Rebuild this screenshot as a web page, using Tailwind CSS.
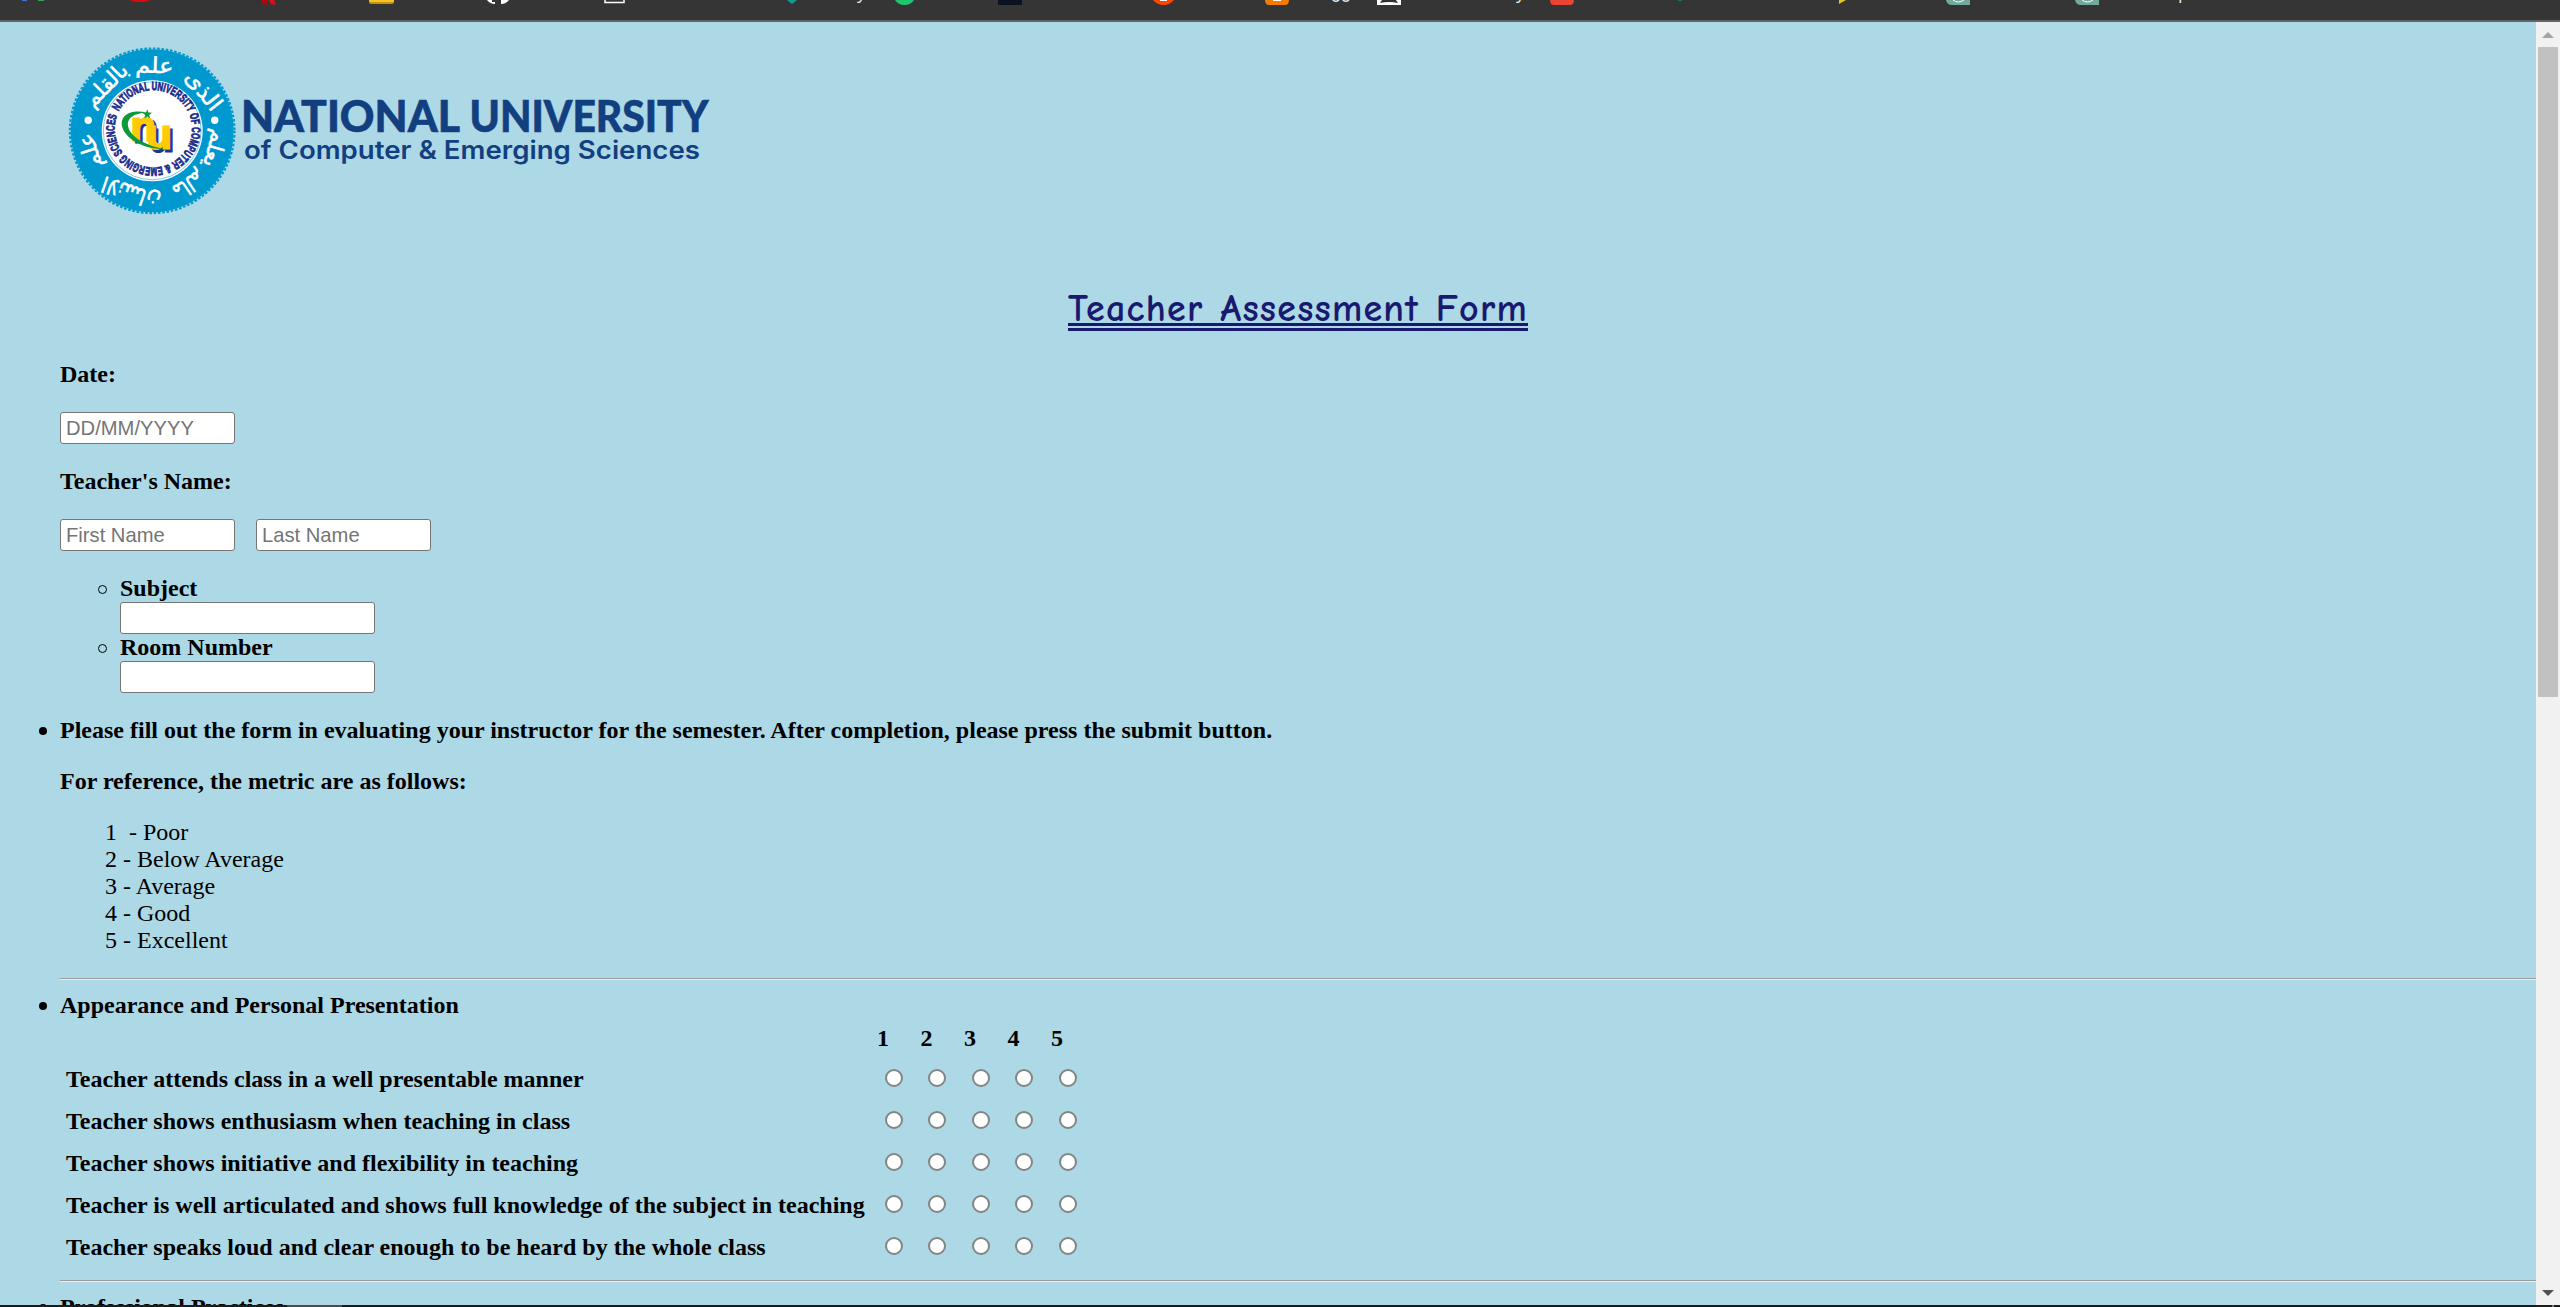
<!DOCTYPE html>
<html lang="en">
<head>
<meta charset="utf-8">
<title>Teacher Assessment Form</title>
<script src="https://cdn.jsdelivr.net/npm/@tailwindcss/browser@4"></script>
</head>
<body class="w-[2560px] h-[1307px] overflow-hidden bg-[#add8e6] flex flex-col text-black">

<!-- Browser bookmarks bar -->
<header class="h-[22px] shrink-0 bg-[#353535] border-b-2 border-[#646464]">
  <svg width="2560" height="20" viewBox="0 0 2560 20" class="block overflow-hidden" font-family="'Open Sans', sans-serif" font-size="18" fill="#e8e8e8">
    <rect x="22" y="0" width="5" height="1" fill="#3f74d8"/><rect x="38" y="0" width="6" height="1" fill="#34a853"/>
    <path d="M130 0h20q-3 2-10 2t-10-2z" fill="#d60d0d"/>
    <path d="M262 0h6v5l-6-1z" fill="#a80710"/><path d="M269 0h5l2 5-5-1z" fill="#e50914"/>
    <path d="M369 0h25v2q0 2-2 2h-21q-2 0-2-2z" fill="#c8910a"/><path d="M369 0h25v1q0 1-2 1h-21q-2 0-2-1z" fill="#f5c427"/>
    <path d="M487 0q3 4 8 4V0zM501 0v4q5 0 8-4z" fill="#fff"/><rect x="492" y="0" width="3" height="2" fill="#353535"/>
    <path d="M605 0v2.500h19V0" fill="none" stroke="#fff" stroke-width="1.500"/>
    <path d="M787 0h10l-5 4z" fill="#0e9f94"/>
    <text x="857" y="-1">y</text>
    <path d="M895 0h19q-3 5-9.500 5T895 0z" fill="#1fc46f"/>
    <rect x="998" width="24" height="5" fill="#0b1220"/>
    <path d="M1153 0h21q-4 5-10.500 5T1153 0z" fill="#ff4500"/><rect x="1160" width="7" height="1" fill="#fff"/>
    <path d="M1265 0h24q0 5-4 5h-16q-4 0-4-5z" fill="#f57c00"/><rect x="1273" width="8" height="1" fill="#fff"/>
    <text x="1331" y="-2" font-family="Roboto, sans-serif">gg</text>
    <rect x="1377" width="24" height="5" fill="#fff"/><path d="M1382 0h14l2 3q-9-2-18 0z" fill="#333"/>
    <text x="1516" y="-1">y</text>
    <path d="M1550 0h24q0 5-4 5h-16q-4 0-4-5z" fill="#e94435"/>
    <rect x="1678" width="4" height="1" fill="#1d6f7c"/>
    <path d="M1839 0h7l-7 4z" fill="#e8c51c"/>
    <path d="M1946 0h24v5h-18q-5 0-6-5z" fill="#74aa9c"/><path d="M1953 0q5 4 11 0" stroke="#fff" fill="none"/>
    <path d="M2075 0h24v5h-18q-5 0-6-5z" fill="#74aa9c"/><path d="M2082 0q5 4 11 0" stroke="#fff" fill="none"/>
    <text x="2178" y="-1">p</text>
  </svg>
</header>

<div class="flex h-[1283px] shrink-0">
  <main class="w-[2536px] h-[1283px] overflow-hidden pl-[60px] font-['Liberation_Serif',serif] text-[24px] leading-[27px]">

    <!-- University logo -->
    <svg width="680" height="208" viewBox="60 22 680 208" class="block">
      <g transform="translate(152.200 130.800)">
        <circle r="81.500" fill="#0099cf"/>
        <circle r="82.300" fill="none" stroke="#0099cf" stroke-width="2.200" stroke-dasharray="2.600 1.710"/>
        <circle r="50.500" fill="#fff"/>
        <circle r="48.900" fill="none" stroke="#5bbcdf" stroke-width=".8"/>
        <circle cx="-64" cy="-10.500" r="3.700" fill="#fff"/><circle cx="62.500" cy="-10.500" r="3.700" fill="#fff"/>
        <g fill="#fff" stroke="#fff" stroke-width=".5" font-family="'DejaVu Sans', sans-serif" font-size="22" text-anchor="middle">
          <text transform="rotate(52) translate(0 -58)" textLength="45" lengthAdjust="spacingAndGlyphs">الذى</text>
          <text transform="rotate(2) translate(0 -58)" textLength="38" lengthAdjust="spacingAndGlyphs">علم</text>
          <text transform="rotate(-45) translate(0 -58)" textLength="52" lengthAdjust="spacingAndGlyphs">بالقلم</text>
          <text transform="rotate(-108) translate(0 -58)" textLength="36" lengthAdjust="spacingAndGlyphs">علم</text>
          <text transform="rotate(-161) translate(0 -58)" textLength="60" lengthAdjust="spacingAndGlyphs">الانسان</text>
          <text transform="rotate(146) translate(0 -58)" textLength="34" lengthAdjust="spacingAndGlyphs">مالم</text>
          <text transform="rotate(106) translate(0 -58)" textLength="38" lengthAdjust="spacingAndGlyphs">يعلم</text>
        </g>
        <path id="ring" d="M-33.500 -19.400A38.700 38.700 0 1 1 -33.550 -19.300" fill="none"/>
        <text font-family="'Liberation Sans Narrow','Liberation Sans',sans-serif" font-weight="700" font-size="12" fill="#1b2a8c" stroke="#1b2a8c" stroke-width=".8"><textPath href="#ring" textLength="238" lengthAdjust="spacingAndGlyphs">NATIONAL UNIVERSITY OF COMPUTER &amp; EMERGING SCIENCES</textPath></text>
        <g font-family="'DejaVu Sans',sans-serif" font-weight="700" font-size="42">
          <g fill="#1f3390" stroke="#1f3390"><text x="-20" y="12.500" textLength="27" lengthAdjust="spacingAndGlyphs">n</text><text x="-4" y="21" textLength="27" lengthAdjust="spacingAndGlyphs">u</text></g>
          <g fill="#ffcb05" stroke="#ffcb05"><text x="-22.500" y="10.500" textLength="27" lengthAdjust="spacingAndGlyphs">n</text><text x="-6.500" y="18.500" textLength="27" lengthAdjust="spacingAndGlyphs">u</text></g>
        </g>
        <path d="M-5 -18C-20 -22 -33 -16 -30 -4C-27 8 -8 19 11 18C-6 15 -22 6 -24 -4C-26 -13 -17 -18 -5 -18Z" fill="#0a9a3c"/>
        <path d="M-5 -21.500l1.200 3.200 3.600.2-2.800 2.200 1 3.500-3-1.900-3 1.900 1-3.500-2.800-2.200 3.600-.2z" fill="#0a9a3c"/>
      </g>
      <g fill="#123f80">
        <g font-family="Lato, sans-serif" font-weight="900" font-size="43.500" stroke="#123f80" stroke-width=".6">
          <text x="241" y="132" textLength="219" lengthAdjust="spacingAndGlyphs">NATIONAL</text>
          <text x="469.500" y="132" textLength="239" lengthAdjust="spacingAndGlyphs">UNIVERSITY</text>
        </g>
        <text x="244" y="158.500" font-family="Inter, sans-serif" font-weight="600" font-size="25" textLength="456" lengthAdjust="spacingAndGlyphs">of Computer &amp; Emerging Sciences</text>
      </g>
    </svg>

    <h1 class="mt-[50px] h-[81px] flex justify-center items-start text-[#191970]">
      <span class="block h-[51px] border-b-8 border-double border-[#191970] font-['Comic_Sans_MS','Comic_Neue',Inter,sans-serif] font-bold text-[38px] leading-[59px] tracking-[1.25px] [word-spacing:2px] [font-feature-settings:'cv11'] whitespace-nowrap">Teacher Assessment Form</span>
    </h1>

    <p class="font-bold">Date:</p>
    <input type="text" placeholder="DD/MM/YYYY" class="block mt-[24px] w-[175px] h-[32px] bg-white border border-[#767676] rounded-[3px] px-[5px] font-['Liberation_Sans',Arial,sans-serif] text-[20.2px] placeholder:text-[#757575]">
    <p class="font-bold mt-[24px]">Teacher's Name:</p>
    <div class="flex gap-[21px] mt-[24px]">
      <input type="text" placeholder="First Name" class="w-[175px] h-[32px] bg-white border border-[#767676] rounded-[3px] px-[5px] font-['Liberation_Sans',Arial,sans-serif] text-[20.2px] placeholder:text-[#757575]">
      <input type="text" placeholder="Last Name" class="w-[175px] h-[32px] bg-white border border-[#767676] rounded-[3px] px-[5px] font-['Liberation_Sans',Arial,sans-serif] text-[20.2px] placeholder:text-[#757575]">
    </div>

    <ul class="mt-[24px] pl-[38px]">
      <li class="flex h-[59px] gap-[13px]">
        <span class="mt-[10px] size-[9px] rounded-full border border-black"></span>
        <div><p class="font-bold h-[27px]">Subject</p><input type="text" aria-label="Subject" class="block w-[255px] h-[32px] bg-white border border-[#767676] rounded-[3px]"></div>
      </li>
      <li class="flex h-[59px] gap-[13px]">
        <span class="mt-[10px] size-[9px] rounded-full border border-black"></span>
        <div><p class="font-bold h-[27px]">Room Number</p><input type="text" aria-label="Room Number" class="block w-[255px] h-[32px] bg-white border border-[#767676] rounded-[3px]"></div>
      </li>
    </ul>

    <div class="flex items-center gap-[13px] -ml-[21px] mt-[24px] font-bold"><span class="size-[8px] rounded-full bg-black"></span><span>Please fill out the form in evaluating your instructor for the semester. After completion, please press the submit button.</span></div>
    <p class="font-bold mt-[24px]">For reference, the metric are as follows:</p>
    <div class="mt-[24px] pl-[45px]">
      <p>1&nbsp; - Poor</p>
      <p>2 - Below Average</p>
      <p>3 - Average</p>
      <p>4 - Good</p>
      <p>5 - Excellent</p>
    </div>

    <hr class="mt-[24px] h-[2px] border-0 border-t border-b border-t-[#9a9a9a] border-b-[#eeeeee]">
    <div class="flex items-center gap-[13px] -ml-[21px] mt-[12px] font-bold"><span class="size-[8px] rounded-full bg-black"></span><span>Appearance and Personal Presentation</span></div>

    <section id="ratings" class="font-bold mt-[6px]">
      <div class="grid grid-cols-[817px_repeat(5,43.5px)] h-[32px]"><span></span><span>1</span><span>2</span><span>3</span><span>4</span><span>5</span></div>
    </section>

    <hr class="mt-[13px] h-[2px] border-0 border-t border-b border-t-[#9a9a9a] border-b-[#eeeeee]">
    <div class="flex items-center gap-[13px] -ml-[21px] mt-[12px] font-bold"><span class="size-[8px] rounded-full bg-black"></span><span>Professional Practices</span></div>
  </main>

  <!-- Scrollbar -->
  <aside class="w-[24px] bg-[#f1f1f1] flex flex-col items-center pt-[10px]">
    <svg width="12" height="6" viewBox="0 0 12 6"><path d="M6 0l6 6H0z" fill="#a3a3a3"/></svg>
    <div class="mt-[9px] w-[20px] h-[650px] bg-[#c1c1c1]"></div>
    <svg width="12" height="6" viewBox="0 0 12 6" class="mt-[593px]"><path d="M0 0h12L6 6z" fill="#505050"/></svg>
  </aside>
</div>

<!-- Taskbar edge -->
<footer class="h-[2px] shrink-0 bg-[#1c1c1c] flex"><div class="ml-[287px] w-[55px] bg-[#4b4e48]"></div><div class="ml-[2210px] w-[2px] bg-[#777777]"></div></footer>

<script>
const statements = [
  'Teacher attends class in a well presentable manner',
  'Teacher shows enthusiasm when teaching in class',
  'Teacher shows initiative and flexibility in teaching',
  'Teacher is well articulated and shows full knowledge of the subject in teaching',
  'Teacher speaks loud and clear enough to be heard by the whole class'
];
const radio = (n) => `<input type="radio" name="q${n}" class="appearance-none mt-[3px] ml-[8px] size-[18px] rounded-full bg-white border-2 border-[#848484]">`;
document.getElementById('ratings').insertAdjacentHTML('beforeend', statements.map((s, n) =>
  `<div class="grid grid-cols-[816.5px_repeat(5,43.5px)] items-start h-[42px] pt-[9px]"><label class="pl-[6px] whitespace-nowrap">${s}</label>${radio(n).repeat(5)}</div>`).join(''));
</script>
</body>
</html>
